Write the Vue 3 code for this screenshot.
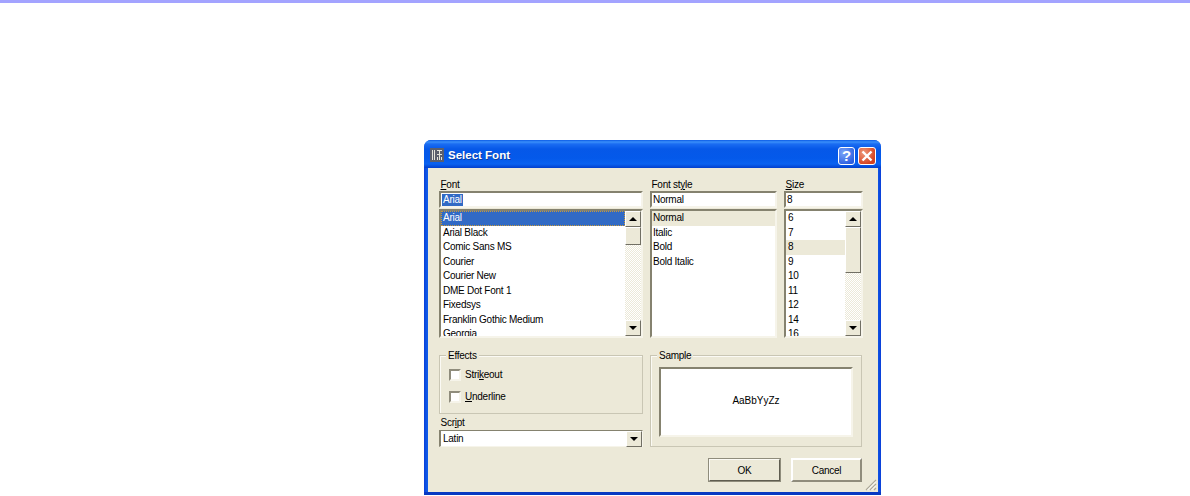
<script setup>
const fonts = ['Arial', 'Arial Black', 'Comic Sans MS', 'Courier', 'Courier New', 'DME Dot Font 1', 'Fixedsys', 'Franklin Gothic Medium', 'Georgia']
const styles = ['Normal', 'Italic', 'Bold', 'Bold Italic']
const sizes = ['6', '7', '8', '9', '10', '11', '12', '14', '16']
</script>

<template>
  <div class="page">
    <div class="topbar"></div>
    <div class="window">
      <header class="title">
        <svg class="app-icon" width="14" height="14" viewBox="0 0 14 14">
          <rect width="14" height="14" fill="#5a5f6e" />
          <path d="M2 2h1v10H2zM4 2h1v10H4zM7 2h5v1H7zM7 6h5v1H7zM9 2h1v10H9zM7 9h1v3H7zM11 9h1v3h-1z" fill="#e4e4dc" />
        </svg>
        <span class="title-text">Select Font</span>
        <span class="cap cap-help">?</span>
        <span class="cap cap-close">
          <svg width="12" height="12" viewBox="0 0 12 12"><path d="M1.5 1.5l9 9M10.5 1.5l-9 9" stroke="#fff" stroke-width="2.4" /></svg>
        </span>
      </header>

      <div class="client">
        <div class="pickers">
          <div class="col">
            <label class="lbl"><u>F</u>ont</label>
            <div class="input sunken"><span class="sel-text">Arial</span></div>
            <div class="list sunken">
              <ul class="rows">
                <li v-for="(f, i) in fonts" :key="f" :class="{ active: i === 0 }">{{ f }}</li>
              </ul>
              <div class="bar">
                <span class="btn"><i class="up"></i></span>
                <span class="thumb thumb-font"></span>
                <span class="track"></span>
                <span class="btn"><i class="down"></i></span>
              </div>
            </div>
          </div>
          <div class="col col-style">
            <label class="lbl">Font st<u>y</u>le</label>
            <div class="input sunken">Normal</div>
            <div class="list sunken">
              <ul class="rows">
                <li v-for="(s, i) in styles" :key="s" :class="{ soft: i === 0 }">{{ s }}</li>
              </ul>
            </div>
          </div>
          <div class="col">
            <label class="lbl"><u>S</u>ize</label>
            <div class="input sunken">8</div>
            <div class="list sunken">
              <ul class="rows">
                <li v-for="(s, i) in sizes" :key="s" :class="{ soft: i === 2 }">{{ s }}</li>
              </ul>
              <div class="bar">
                <span class="btn"><i class="up"></i></span>
                <span class="thumb thumb-size"></span>
                <span class="track"></span>
                <span class="btn"><i class="down"></i></span>
              </div>
            </div>
          </div>
        </div>

        <div class="lower">
          <div class="left">
            <section class="group effects">
              <span class="legend">Effects</span>
              <div class="check"><span class="box"></span><span>Stri<u>k</u>eout</span></div>
              <div class="check"><span class="box"></span><span><u>U</u>nderline</span></div>
            </section>
            <label class="lbl script-lbl">Scr<u>i</u>pt</label>
            <div class="combo sunken">
              <span class="combo-text">Latin</span>
              <span class="btn"><i class="down"></i></span>
            </div>
          </div>
          <section class="group sample">
            <span class="legend">Sample</span>
            <div class="sample-box sunken">AaBbYyZz</div>
          </section>
        </div>

        <div class="actions">
          <button class="push default">OK</button>
          <button class="push">Cancel</button>
        </div>
        <svg class="grip" width="12" height="12" viewBox="0 0 12 12">
          <path d="M11 1L1 11M11 5L5 11M11 9L9 11" stroke="#aca899" stroke-width="1.2" />
          <path d="M11 2.5L2.5 11M11 6.5L6.5 11" stroke="#fff" stroke-width="1" />
        </svg>
      </div>
    </div>
  </div>
</template>

<style>
html, body { margin: 0; background: #fff; overflow: hidden; }
</style>

<style scoped>
.page {
  width: 1190px;
  height: 496px;
  font: 10px/13px "Liberation Sans", Arial, sans-serif;
  letter-spacing: -0.25px;
  color: #000;
  overflow: hidden;
}
.topbar { height: 3px; background: #a3a3ff; }
.window {
  position: relative;
  width: 457px;
  height: 355px;
  margin: 137px 0 0 424px;
  box-sizing: border-box;
  padding: 0 3px 0 4px;
  background: linear-gradient(90deg, #0a3fd8 0, #0f5ae8 3px, #0f5ae8 453px, #0a3fd8 100%);
  border-bottom: 3px solid #0739c2;
  border-radius: 7px 7px 0 0;
  display: flex;
  flex-direction: column;
}
.title {
  height: 28px;
  margin: 0 -3px 0 -4px;
  padding: 0 5px 0 6px;
  display: flex;
  align-items: center;
  border-radius: 7px 7px 0 0;
  background: linear-gradient(180deg, #0a5ae6 0, #3a8ffa 2px, #1a6cf2 4px, #0658e8 9px, #0459ea 18px, #0a62f0 24px, #0447d6 27px, #0340cc 28px);
}
.app-icon { margin: 2px 4px 0 0; flex: none; }
.title-text {
  flex: 1;
  color: #fff;
  font-weight: 700;
  font-size: 11.5px;
  letter-spacing: 0;
  padding-top: 2px;
  text-shadow: 1px 1px 0 #0f3fa0;
}
.cap {
  width: 17px;
  height: 18px;
  box-sizing: border-box;
  border: 1px solid #fff;
  border-radius: 3px;
  display: flex;
  align-items: center;
  justify-content: center;
  color: #fff;
  margin-left: 3px;
  margin-top: 3px;
}
.cap-help {
  background: radial-gradient(circle at 30% 30%, #7ba4f8, #2c5fe0 80%);
  font-size: 15px;
  font-weight: 700;
}
.cap-close {
  width: 18px;
  background: radial-gradient(circle at 30% 30%, #ef9a7c, #d5411f 75%);
}

.client {
  position: relative;
  flex: 1;
  background: #ece9d8;
  padding: 10px 16px 0 11px;
  display: flex;
  flex-direction: column;
}
.sunken {
  box-sizing: border-box;
  background: #fff;
  border-style: solid;
  border-width: 2px;
  border-color: #85826f #f6f4ea #f6f4ea #85826f;
}
.pickers {
  display: grid;
  grid-template-columns: 204px 127px 79px;
  column-gap: 7px;
}
.lbl { display: block; height: 13px; padding-left: 1.5px; }
.input {
  height: 17px;
  margin-bottom: 1px;
  padding: 0 1px;
  line-height: 13px;
  white-space: nowrap;
}
.sel-text {
  display: inline-block;
  background: #316ac5;
  color: #fff;
  padding: 0 1px;
  height: 12px;
  line-height: 12px;
  margin-top: 1px;
}
.list {
  height: 129px;
  display: flex;
  overflow: hidden;
}
.rows {
  flex: 1;
  min-width: 0;
  margin: 0;
  padding: 0;
  list-style: none;
}
.rows li {
  height: 14.5px;
  line-height: 14px;
  padding-left: 2px;
  white-space: nowrap;
}
.col-style .rows li { padding-left: 1px; }
.rows li.active {
  background: #316ac5;
  color: #fff;
  outline: 1px dotted #c99a3a;
  outline-offset: -1px;
}
.rows li.soft { background: #ece9d8; }
.bar {
  width: 16px;
  flex: none;
  display: flex;
  flex-direction: column;
}
.btn {
  flex: none;
  width: 16px;
  height: 16px;
  box-sizing: border-box;
  background: #ece9d8;
  border: 1px solid;
  border-color: #fff #716f64 #716f64 #fff;
  display: flex;
  align-items: center;
  justify-content: center;
}
.up, .down {
  width: 0;
  height: 0;
  border-left: 4px solid transparent;
  border-right: 4px solid transparent;
}
.up { border-bottom: 4px solid #000; }
.down { border-top: 4px solid #000; }
.thumb {
  flex: none;
  box-sizing: border-box;
  background: #ece9d8;
  border: 1px solid;
  border-color: #fff #716f64 #716f64 #fff;
}
.thumb-font { height: 18px; }
.thumb-size { height: 46px; }
.track {
  flex: 1;
  background: repeating-conic-gradient(#ece9d8 0 25%, #fff 0 50%) 0 0 / 2px 2px;
}

.lower {
  margin-top: 17px;
  display: flex;
  gap: 7px;
}
.left { width: 204px; }
.group {
  position: relative;
  box-sizing: border-box;
  border: 1px solid #c9c6b4;
  box-shadow: inset 1px 1px 0 #fbfaf4;
}
.legend {
  position: absolute;
  top: -7px;
  left: 6px;
  padding: 0 2px;
  background: #ece9d8;
}
.effects {
  height: 59px;
  padding: 12px 0 0 9px;
  display: flex;
  flex-direction: column;
  gap: 9px;
}
.check {
  display: flex;
  align-items: center;
  gap: 4px;
  height: 13px;
}
.box {
  width: 12px;
  height: 12px;
  box-sizing: border-box;
  background: #fff;
  border: 2px solid;
  border-color: #8f8c7c #f6f4ea #f6f4ea #8f8c7c;
}
.script-lbl { height: 16px; padding-top: 2px; box-sizing: border-box; }
.combo {
  height: 17px;
  display: flex;
  align-items: center;
  border-width: 1px 1px 1px 2px;
}
.combo-text { flex: 1; padding-left: 2px; }
.sample {
  width: 212px;
  height: 92px;
  padding: 11px 8px 9px 8px;
}
.sample-box {
  height: 100%;
  padding-bottom: 3px;
  display: flex;
  align-items: center;
  justify-content: center;
  letter-spacing: 0;
}
.actions {
  margin-top: 11px;
  display: flex;
  justify-content: flex-end;
  gap: 10px;
}
.push {
  width: 71px;
  height: 24px;
  padding: 0;
  box-sizing: border-box;
  background: #ece9d8;
  border: 2px solid;
  border-color: #fff #8f8c7c #8f8c7c #fff;
  font: inherit;
  letter-spacing: inherit;
  color: #000;
}
.push.default {
  width: 73px;
  border: 2px solid;
  border-color: #fbfaf4 #5f5d50 #5f5d50 #fbfaf4;
  outline: 1px solid #8f8c7c;
  outline-offset: -1px;
}
.grip {
  position: absolute;
  right: 1px;
  bottom: 1px;
}
</style>
